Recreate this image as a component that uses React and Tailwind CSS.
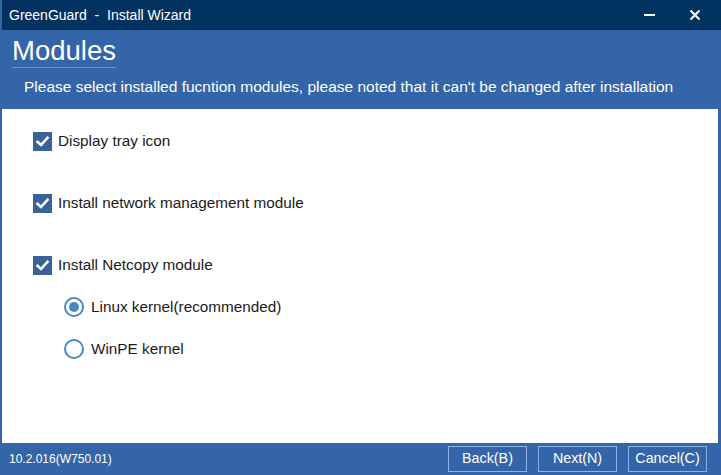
import React, { useState } from "react";

function Check({ checked, label, onToggle }) {
  return (
    <div className="flex items-center h-[20px] cursor-default" onClick={onToggle}>
      <span className={`w-[19px] h-[19px] flex items-center justify-center ${checked ? "bg-[#3b6297]" : "bg-white border border-[#3b6297]"}`}>
        {checked && (
          <svg width="15" height="15" viewBox="0 0 15 15">
            <path d="M2.5 7.8 L6 11 L12.5 3.8" fill="none" stroke="white" strokeWidth="2.6" strokeLinecap="square" />
          </svg>
        )}
      </span>
      <span className="ml-[6px] text-[15.3px] text-[#1a1a1a]">{label}</span>
    </div>
  );
}

function Radio({ checked, label, onPick }) {
  return (
    <div className="flex items-center h-[20px] cursor-default" onClick={onPick}>
      <span className="w-[20px] h-[20px] rounded-full border-[2px] border-[#4a85c6] flex items-center justify-center bg-white">
        {checked && <span className="w-[10px] h-[10px] rounded-full bg-[#4a85c6]" />}
      </span>
      <span className="ml-[7px] text-[15.3px] text-[#1a1a1a]">{label}</span>
    </div>
  );
}

export default function App() {
  const [tray, setTray] = useState(true);
  const [net, setNet] = useState(true);
  const [netcopy, setNetcopy] = useState(true);
  const [kernel, setKernel] = useState("linux");

  return (
    <div className="w-[721px] h-[475px] flex flex-col bg-[#3465a9] font-['Liberation_Sans',Arial,sans-serif] select-none overflow-hidden">
      {/* title bar */}
      <div className="h-[30px] bg-[#02325f] flex items-center text-white ml-[2px]">
        <span className="pl-[7px] text-[14px]">GreenGuard&nbsp; - &nbsp;Install Wizard</span>
        <div className="ml-auto flex items-center h-full">
          <div className="w-[46px] h-full flex items-center justify-center">
            <span className="block w-[11px] h-[2px] bg-white" />
          </div>
          <div className="w-[46px] h-full flex items-center justify-center mr-[3px]">
            <svg width="12" height="12" viewBox="0 0 12 12">
              <path d="M1.5 1.5 L10.5 10.5 M10.5 1.5 L1.5 10.5" stroke="white" strokeWidth="2" />
            </svg>
          </div>
        </div>
      </div>

      {/* header */}
      <div className="h-[79px] px-[12px] text-white">
        <div className="pt-[5px] text-[27.5px] leading-[32px] inline-block border-b border-[#6f92c6]">Modules</div>
        <div className="pl-[12px] pt-[10px] text-[15.5px] leading-[18px]">
          Please select installed fucntion modules, please noted that it can't be changed after installation
        </div>
      </div>

      {/* content */}
      <div className="flex-1 bg-white ml-[2px] mr-[3px] pl-[31px] pt-[22px] flex flex-col">
        <Check checked={tray} label="Display tray icon" onToggle={() => setTray(!tray)} />
        <div className="h-[42px]" />
        <Check checked={net} label="Install network management module" onToggle={() => setNet(!net)} />
        <div className="h-[42px]" />
        <Check checked={netcopy} label="Install Netcopy module" onToggle={() => setNetcopy(!netcopy)} />
        <div className="pl-[31px] pt-[22px] flex flex-col gap-[22px]">
          <Radio checked={kernel === "linux"} label="Linux kernel(recommended)" onPick={() => setKernel("linux")} />
          <Radio checked={kernel === "winpe"} label="WinPE kernel" onPick={() => setKernel("winpe")} />
        </div>
      </div>

      {/* footer */}
      <div className="h-[32px] flex items-center text-white">
        <span className="pl-[9px] text-[12px]">10.2.016(W750.01)</span>
        <div className="ml-auto flex gap-[11px] pr-[14px]">
          {["Back(B)", "Next(N)", "Cancel(C)"].map((b) => (
            <button key={b} className="w-[79px] h-[26px] border border-[#8db3e6] text-[14.3px] text-white bg-[#3465a9]">
              {b}
            </button>
          ))}
        </div>
      </div>
    </div>
  );
}
